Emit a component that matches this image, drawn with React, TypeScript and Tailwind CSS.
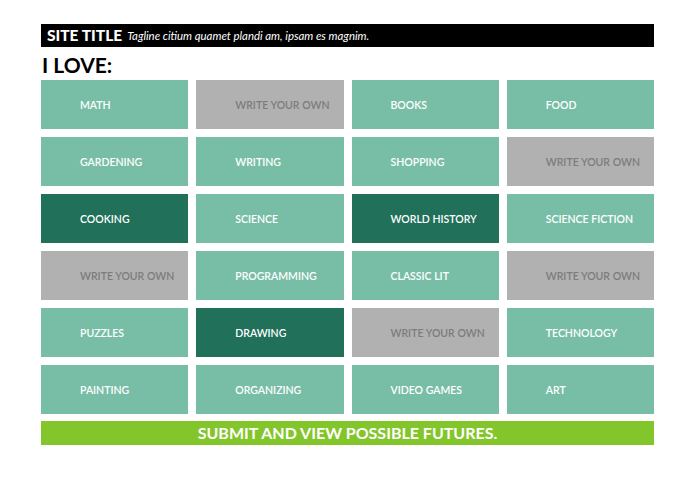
import React from "react";

type Kind = "L" | "G" | "D";
const tiles: [string, Kind][] = [
  ["MATH", "L"], ["WRITE YOUR OWN", "G"], ["BOOKS", "L"], ["FOOD", "L"],
  ["GARDENING", "L"], ["WRITING", "L"], ["SHOPPING", "L"], ["WRITE YOUR OWN", "G"],
  ["COOKING", "D"], ["SCIENCE", "L"], ["WORLD HISTORY", "D"], ["SCIENCE FICTION", "L"],
  ["WRITE YOUR OWN", "G"], ["PROGRAMMING", "L"], ["CLASSIC LIT", "L"], ["WRITE YOUR OWN", "G"],
  ["PUZZLES", "L"], ["DRAWING", "D"], ["WRITE YOUR OWN", "G"], ["TECHNOLOGY", "L"],
  ["PAINTING", "L"], ["ORGANIZING", "L"], ["VIDEO GAMES", "L"], ["ART", "L"],
];

const kindClass: Record<Kind, string> = {
  L: "bg-[#78bea6] text-white",
  G: "bg-[#b1b1b1] text-[#7c7c7c]",
  D: "bg-[#20705a] text-white",
};

export default function App() {
  return (
    <div
      className="w-[695px] h-[494px] bg-white"
      style={{ fontFamily: "Lato, 'Liberation Sans', sans-serif" }}
    >
      <div className="ml-[41px] w-[613px] pt-[24px]">
        <div className="h-[23px] bg-black flex items-center pl-[6px] text-white">
          <span className="text-[15.5px] font-black leading-none">SITE TITLE</span>
          <span className="ml-[5px] text-[11.4px] italic leading-none">
            Tagline citium quamet plandi am, ipsam es magnim.
          </span>
        </div>
        <h1 className="h-[33px] flex items-center pt-[2px] pl-[1px] text-[21px] font-bold leading-none text-black">
          I LOVE:
        </h1>
        <div className="grid grid-cols-4 gap-[8px]">
          {tiles.map(([label, kind], i) => (
            <div
              key={i}
              className={`h-[49px] flex items-center pl-[39px] pt-[2px] text-[10.5px] font-semibold ${kindClass[kind]}`}
            >
              {label}
            </div>
          ))}
        </div>
        <div className="mt-[7px] h-[24px] bg-[#83c62b] flex items-center justify-center text-white text-[16px] font-bold">
          SUBMIT AND VIEW POSSIBLE FUTURES.
        </div>
      </div>
    </div>
  );
}
